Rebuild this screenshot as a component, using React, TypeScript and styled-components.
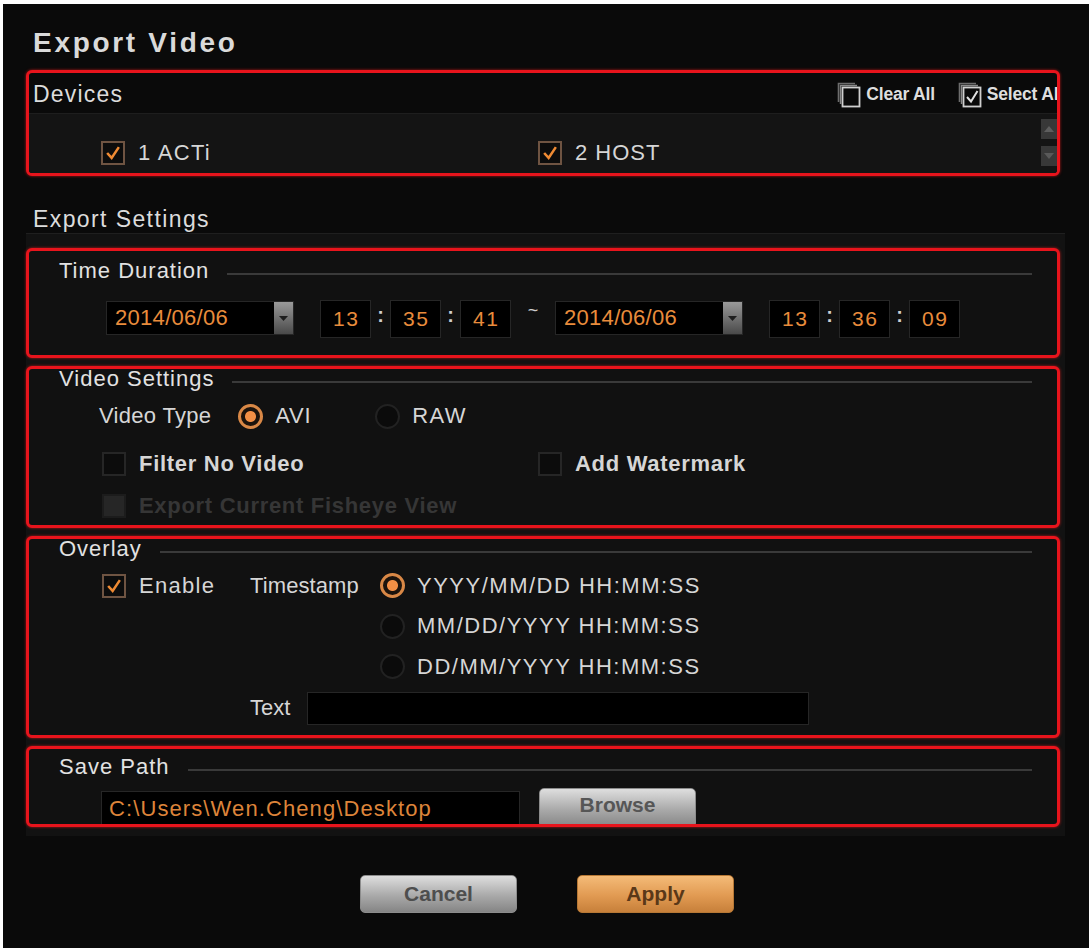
import styled, { createGlobalStyle } from "styled-components";

const GlobalStyle = createGlobalStyle`
  html, body {
    margin: 0;
    padding: 0;
    background: #ffffff;
  }
  body {
    font-family: "Liberation Sans", Arial, sans-serif;
  }
`;

const ORANGE = "#e98c3c";

const Page = styled.div`
  padding: 4px 0 0 3px;
  background: #ffffff;
`;

const Window = styled.div`
  height: 944px;
  box-sizing: border-box;
  display: flex;
  flex-direction: column;
  padding: 0 24px 0 23px;
  background: #0a0a0a;
  color: #d4d4d4;
  overflow: hidden;
`;

const Title = styled.h1`
  margin: 23px 0 11px 7px;
  font-size: 28px;
  line-height: 32px;
  font-weight: 700;
  letter-spacing: 2.7px;
  color: #dadada;
`;

const RedBox = styled.section<{ $height: number; $dark?: boolean }>`
  width: 1034px;
  height: ${(p) => p.$height}px;
  box-sizing: border-box;
  flex-shrink: 0;
  display: flex;
  flex-direction: column;
  border: 3px solid #e8141c;
  border-radius: 6px;
  background: ${(p) => (p.$dark ? "#0a0a0a" : "#111111")};
  box-shadow: 0 0 3px rgba(255, 30, 30, 0.7);
  overflow: hidden;
`;

const DevicesHeader = styled.div`
  height: 40px;
  box-sizing: border-box;
  flex-shrink: 0;
  display: flex;
  align-items: center;
  padding: 3px 0 0 4px;
`;

const Heading = styled.span`
  font-size: 23px;
  letter-spacing: 1.2px;
  color: #dcdcdc;
  white-space: nowrap;
`;

const Tools = styled.div`
  margin-left: auto;
  margin-right: -6px;
  flex-shrink: 0;
  display: flex;
  align-items: center;
  gap: 23px;
`;

const Tool = styled.span`
  display: flex;
  align-items: center;
  gap: 5px;
  font-size: 17.5px;
  font-weight: 700;
  letter-spacing: -0.2px;
  color: #dedede;
  white-space: nowrap;
`;

const DeviceList = styled.div`
  flex: 1;
  display: flex;
  align-items: flex-end;
  padding: 0 0 9px 72px;
  background: #141414;
  border-top: 1px solid #1e1e1e;
`;

const CheckItem = styled.div<{ $width?: number }>`
  width: ${(p) => (p.$width ? `${p.$width}px` : "auto")};
  display: flex;
  align-items: center;
  gap: 13px;
`;

const Text = styled.span<{ $bold?: boolean; $dim?: boolean; $ls?: number }>`
  font-size: 22px;
  font-weight: ${(p) => (p.$bold ? 700 : 400)};
  letter-spacing: ${(p) => p.$ls ?? 0.8}px;
  color: ${(p) => (p.$dim ? "#363636" : "#d6d6d6")};
  white-space: nowrap;
`;

const Scroll = styled.div`
  margin-left: auto;
  align-self: flex-start;
  margin-top: 5px;
  display: flex;
  flex-direction: column;
  gap: 7px;
`;

const ScrollButton = styled.span`
  width: 16px;
  height: 20px;
  display: flex;
  align-items: center;
  justify-content: center;
  background: #383838;
`;

const SubHeading = styled(Heading)`
  display: block;
  margin: 30px 0 1px 7px;
  line-height: 26px;
  letter-spacing: 1.4px;
`;

const Panel = styled.div`
  display: flex;
  flex-direction: column;
  gap: 8px;
  padding: 14px 0 9px;
  background: #121212;
  border-top: 1px solid #1f1f1f;
`;

const Legend = styled.div<{ $top: number }>`
  display: flex;
  align-items: center;
  gap: 18px;
  height: 20px;
  flex-shrink: 0;
  padding: ${(p) => p.$top}px 25px 0 30px;
`;

const LegendText = styled.span`
  font-size: 22px;
  line-height: 20px;
  letter-spacing: 1px;
  color: #e2e2e2;
  white-space: nowrap;
`;

const LegendLine = styled.span`
  flex: 1;
  height: 2px;
  margin-top: 5px;
  background: #3a3a3a;
`;

const TimeRow = styled.div`
  display: flex;
  align-items: flex-start;
  margin-top: 19px;
  padding-left: 77px;
`;

const DateSelect = styled.div`
  width: 188px;
  height: 34px;
  box-sizing: border-box;
  display: flex;
  margin-top: 1px;
  margin-right: 26px;
  border: 1px solid #262626;
  background: #000;
`;

const DateText = styled.span`
  flex: 1;
  padding-left: 8px;
  line-height: 32px;
  font-size: 22px;
  letter-spacing: 0.3px;
  color: ${ORANGE};
`;

const DropButton = styled.span`
  width: 19px;
  display: flex;
  align-items: center;
  justify-content: center;
  background: linear-gradient(#9a9a9a, #4a4a4a);
`;

const TimeBox = styled.span`
  width: 51px;
  height: 38px;
  box-sizing: border-box;
  border: 1px solid #262626;
  background: #000;
  text-align: center;
  line-height: 36px;
  font-size: 21px;
  letter-spacing: 1.5px;
  text-indent: 1.5px;
  color: ${ORANGE};
`;

const Colon = styled.span`
  width: 19px;
  text-align: center;
  line-height: 30px;
  font-size: 20px;
  font-weight: 700;
  color: #cfcfcf;
`;

const Tilde = styled.span`
  width: 44px;
  text-align: center;
  line-height: 20px;
  font-size: 18px;
  color: #cfcfcf;
`;

const Row = styled.div<{ $top: number; $left: number }>`
  display: flex;
  align-items: center;
  height: 26px;
  flex-shrink: 0;
  margin-top: ${(p) => p.$top}px;
  padding-left: ${(p) => p.$left}px;
`;

const FieldLabel = styled(Text)<{ $space: number }>`
  margin-right: ${(p) => p.$space}px;
`;

const RadioOption = styled.div<{ $width?: number }>`
  width: ${(p) => (p.$width ? `${p.$width}px` : "auto")};
  display: flex;
  align-items: center;
  gap: 12px;
`;

const Radio = styled.span<{ $on?: boolean }>`
  width: 25px;
  height: 25px;
  box-sizing: border-box;
  flex-shrink: 0;
  border-radius: 50%;
  border: ${(p) => (p.$on ? "3px solid #d98846" : "2px solid #222222")};
  background: ${(p) =>
    p.$on ? "radial-gradient(circle, #f28f45 0 5px, #1c130c 6px)" : "#0b0b0b"};
`;

const Check = styled.span<{ $state: "on" | "off" | "disabled" }>`
  width: 24px;
  height: 24px;
  box-sizing: border-box;
  flex-shrink: 0;
  display: flex;
  align-items: center;
  justify-content: center;
  border: 2px solid
    ${(p) => (p.$state === "on" ? "#6f5442" : p.$state === "disabled" ? "#1c1c1c" : "#262626")};
  background: ${(p) => (p.$state === "disabled" ? "#262626" : "#0c0c0c")};
`;

const OverlayGrid = styled.div`
  display: grid;
  grid-template-columns: 148px 130px auto;
  grid-auto-rows: 26px;
  row-gap: 14.5px;
  align-items: center;
  margin-top: 13.5px;
  padding-left: 73px;
`;

const GridCell = styled.div<{ $col: number }>`
  grid-column: ${(p) => p.$col};
  display: flex;
  align-items: center;
`;

const TextRow = styled.div`
  display: flex;
  align-items: center;
  margin-top: 12px;
  padding-left: 221px;
`;

const TextInput = styled.span`
  width: 502px;
  height: 33px;
  box-sizing: border-box;
  margin-left: 17px;
  border: 1px solid #262626;
  background: #000;
`;

const PathRow = styled.div`
  display: flex;
  align-items: flex-start;
  gap: 19px;
  margin-top: 14px;
  padding-left: 72px;
`;

const PathField = styled.span`
  width: 419px;
  height: 36px;
  box-sizing: border-box;
  flex-shrink: 0;
  padding-left: 7px;
  border: 1px solid #262626;
  background: #000;
  line-height: 34px;
  font-size: 22px;
  letter-spacing: 1.1px;
  color: #dd843a;
  white-space: nowrap;
`;

const GrayButton = styled.span<{ $tone?: "gray" | "orange" }>`
  width: 157px;
  height: 38px;
  box-sizing: border-box;
  flex-shrink: 0;
  display: flex;
  align-items: center;
  justify-content: center;
  border-radius: 5px;
  border: 1px solid ${(p) => (p.$tone === "orange" ? "#b77835" : "#8c8c8c")};
  background: ${(p) =>
    p.$tone === "orange"
      ? "linear-gradient(#f4bb78, #e19a52 55%, #c7803a)"
      : "linear-gradient(#dedede, #a9a9a9 55%, #858585)"};
  font-size: 21px;
  font-weight: 700;
  color: ${(p) => (p.$tone === "orange" ? "#5a3818" : "#4e4e4e")};
`;

const BrowseButton = styled(GrayButton)`
  height: 40px;
  margin-top: -3.5px;
  padding-bottom: 6px;
  color: #565656;
`;

const Actions = styled.div`
  display: flex;
  justify-content: center;
  gap: 60px;
  margin-top: 39px;
  padding-left: 3px;
`;

function CheckMark() {
  return (
    <svg width="18" height="18" viewBox="0 0 20 20">
      <path d="M3.5 10 L8.5 15.5 L16.5 3.5" fill="none" stroke="#ee8a33" strokeWidth="2.8" />
    </svg>
  );
}

function CheckBox({ state }: { state: "on" | "off" | "disabled" }) {
  return <Check $state={state}>{state === "on" && <CheckMark />}</Check>;
}

function StackIcon({ checked }: { checked?: boolean }) {
  return (
    <svg width="24" height="26" viewBox="0 0 24 26">
      <path d="M1.5 20 V1.5 H18" fill="none" stroke="#6d6d6d" strokeWidth="1.6" />
      <path d="M3.5 22 V3.5 H20" fill="none" stroke="#8a8a8a" strokeWidth="1.4" />
      <rect x="5.5" y="5.5" width="17" height="19" fill="#0a0a0a" stroke="#cfcfcf" strokeWidth="1.8" />
      {checked && <path d="M9 15 L13 19.5 L19.5 9" fill="none" stroke="#e0e0e0" strokeWidth="2" />}
    </svg>
  );
}

function Arrow({ up }: { up?: boolean }) {
  return (
    <svg width="10" height="6" viewBox="0 0 10 6">
      <path d={up ? "M0 6 L5 0 L10 6 Z" : "M0 0 L5 6 L10 0 Z"} fill={up ? "#5e5e5e" : "#595959"} />
    </svg>
  );
}

function DateField({ value }: { value: string }) {
  return (
    <DateSelect>
      <DateText>{value}</DateText>
      <DropButton>
        <svg width="9" height="5" viewBox="0 0 9 5">
          <path d="M0 0 L4.5 5 L9 0 Z" fill="#1e1e1e" />
        </svg>
      </DropButton>
    </DateSelect>
  );
}

function Clock({ h, m, s }: { h: string; m: string; s: string }) {
  return (
    <>
      <TimeBox>{h}</TimeBox>
      <Colon>:</Colon>
      <TimeBox>{m}</TimeBox>
      <Colon>:</Colon>
      <TimeBox>{s}</TimeBox>
    </>
  );
}

function Section({ title, top }: { title: string; top: number }) {
  return (
    <Legend $top={top}>
      <LegendText>{title}</LegendText>
      <LegendLine />
    </Legend>
  );
}

const formats = ["YYYY/MM/DD HH:MM:SS", "MM/DD/YYYY HH:MM:SS", "DD/MM/YYYY HH:MM:SS"];

export default function App() {
  return (
    <Page>
      <GlobalStyle />
      <Window>
        <Title>Export Video</Title>

        <RedBox $height={106} $dark>
          <DevicesHeader>
            <Heading>Devices</Heading>
            <Tools>
              <Tool>
                <StackIcon />
                Clear All
              </Tool>
              <Tool>
                <StackIcon checked />
                Select All
              </Tool>
            </Tools>
          </DevicesHeader>
          <DeviceList>
            <CheckItem $width={437}>
              <CheckBox state="on" />
              <Text $ls={1.3}>1 ACTi</Text>
            </CheckItem>
            <CheckItem>
              <CheckBox state="on" />
              <Text $ls={1}>2 HOST</Text>
            </CheckItem>
            <Scroll>
              <ScrollButton>
                <Arrow up />
              </ScrollButton>
              <ScrollButton>
                <Arrow />
              </ScrollButton>
            </Scroll>
          </DeviceList>
        </RedBox>

        <SubHeading>Export Settings</SubHeading>

        <Panel>
          <RedBox $height={110}>
            <Section title="Time Duration" top={10} />
            <TimeRow>
              <DateField value="2014/06/06" />
              <Clock h="13" m="35" s="41" />
              <Tilde>~</Tilde>
              <DateField value="2014/06/06" />
              <Clock h="13" m="36" s="09" />
            </TimeRow>
          </RedBox>

          <RedBox $height={162}>
            <Section title="Video Settings" top={0} />
            <Row $top={14} $left={70}>
              <FieldLabel $space={27} $ls={0.3}>
                Video Type
              </FieldLabel>
              <RadioOption $width={137}>
                <Radio $on />
                <Text $ls={0.8}>AVI</Text>
              </RadioOption>
              <RadioOption>
                <Radio />
                <Text $ls={1.4}>RAW</Text>
              </RadioOption>
            </Row>
            <Row $top={22} $left={73}>
              <CheckItem $width={436}>
                <CheckBox state="off" />
                <Text $bold $ls={0.7}>
                  Filter No Video
                </Text>
              </CheckItem>
              <CheckItem>
                <CheckBox state="off" />
                <Text $bold $ls={0.7}>
                  Add Watermark
                </Text>
              </CheckItem>
            </Row>
            <Row $top={16} $left={73}>
              <CheckItem>
                <CheckBox state="disabled" />
                <Text $bold $dim $ls={0.7}>
                  Export Current Fisheye View
                </Text>
              </CheckItem>
            </Row>
          </RedBox>

          <RedBox $height={202}>
            <Section title="Overlay" top={0} />
            <OverlayGrid>
              <GridCell $col={1}>
                <CheckItem>
                  <CheckBox state="on" />
                  <Text $ls={1.3}>Enable</Text>
                </CheckItem>
              </GridCell>
              <GridCell $col={2}>
                <Text $ls={0.1}>Timestamp</Text>
              </GridCell>
              {formats.map((f, i) => (
                <GridCell $col={3} key={f}>
                  <RadioOption>
                    <Radio $on={i === 0} />
                    <Text $ls={1.5}>{f}</Text>
                  </RadioOption>
                </GridCell>
              ))}
            </OverlayGrid>
            <TextRow>
              <Text $ls={0}>Text</Text>
              <TextInput />
            </TextRow>
          </RedBox>

          <RedBox $height={81}>
            <Section title="Save Path" top={8} />
            <PathRow>
              <PathField>C:\Users\Wen.Cheng\Desktop</PathField>
              <BrowseButton>Browse</BrowseButton>
            </PathRow>
          </RedBox>
        </Panel>

        <Actions>
          <GrayButton>Cancel</GrayButton>
          <GrayButton $tone="orange">Apply</GrayButton>
        </Actions>
      </Window>
    </Page>
  );
}
